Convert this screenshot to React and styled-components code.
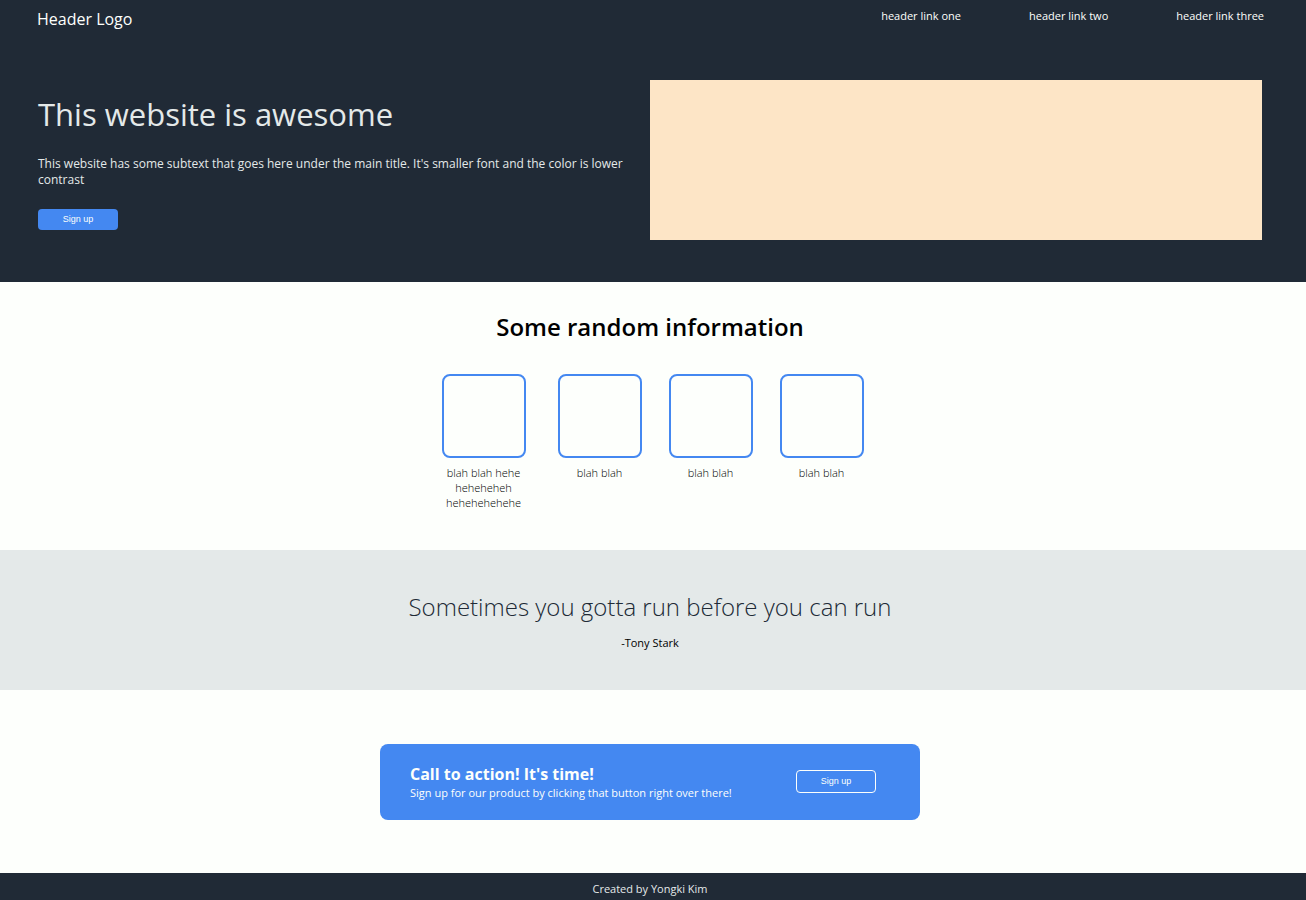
import React from "react";
import styled, { createGlobalStyle } from "styled-components";

const GlobalStyle = createGlobalStyle`
  *, *::before, *::after { box-sizing: border-box; }
  body {
    margin: 0;
    background: #fdfffc;
    color: #000;
    font-family: "Open Sans", "Noto Sans", sans-serif;
    font-size: 11px;
    line-height: 15px;
  }
  h1, h2, p, ul, blockquote, figure { margin: 0; padding: 0; }
`;

const Page = styled.div`
  min-height: 100vh;
  display: flex;
  flex-direction: column;
`;

const Header = styled.header`
  background: #202a36;
  color: #fdfffc;
  padding: 8px 42px 42px 37px;
`;

const TopBar = styled.div`
  display: flex;
  justify-content: space-between;
  align-items: flex-start;
`;

const Logo = styled.div`
  font-size: 16px;
  line-height: 22px;
`;

const LinkList = styled.ul`
  display: flex;
  gap: 68px;
  list-style: none;
`;

const HeaderLink = styled.a`
  color: inherit;
  text-decoration: none;
`;

const Hero = styled.section`
  display: grid;
  grid-template-columns: 1fr 1fr;
  padding: 0 2px 0 1px;
  margin-top: 50px;
`;

const HeroText = styled.div`
  padding: 12px 24px 0 0;
`;

const HeroTitle = styled.h1`
  color: #e4e9e9;
  font-size: 31px;
  font-weight: 400;
  line-height: 44px;
`;

const HeroSubtext = styled.p`
  color: #e4e9e9;
  font-size: 12px;
  line-height: 16px;
  margin: 20px 0 21px;
`;

const HeroImage = styled.div`
  background: #fde5c6;
  height: 160px;
`;

const Button = styled.button`
  display: block;
  width: 80px;
  height: ${(p) => (p.$outlined ? "23px" : "21px")};
  padding: 0 0 1px;
  border: ${(p) => (p.$outlined ? "1px solid #fdfffc" : "0")};
  border-radius: 4px;
  background: #4488f1;
  color: #fdfffc;
  font-family: "Liberation Sans", Arial, sans-serif;
  font-size: 9px;
  cursor: pointer;
`;

const Info = styled.section`
  padding: 28px 6px 40px 0;
  text-align: center;
`;

const InfoTitle = styled.h2`
  font-size: 24px;
  font-weight: 600;
  line-height: 34px;
`;

const Cards = styled.ul`
  display: flex;
  justify-content: center;
  gap: 27px;
  margin-top: 30px;
  list-style: none;
`;

const Card = styled.li`
  display: flex;
  flex-direction: column;
  align-items: center;
  max-width: 94px;
  min-width: ${(p) => (p.$wide ? "94px" : "84px")};
  font-weight: 300;
`;

const CardBox = styled.div`
  width: 84px;
  height: 84px;
  margin-bottom: 7px;
  border: 2px solid #4488f1;
  border-radius: 8px;
`;

const Quote = styled.figure`
  padding: 40px 6px 40px 0;
  background: #e4e9e9;
  text-align: center;
`;

const QuoteText = styled.blockquote`
  color: #202a36;
  font-size: 24px;
  font-weight: 300;
  line-height: 34px;
`;

const QuoteAuthor = styled.figcaption`
  margin-top: 11px;
`;

const Action = styled.section`
  display: flex;
  justify-content: center;
  padding: 54px 6px 53px 0;
`;

const ActionPanel = styled.div`
  display: flex;
  justify-content: space-between;
  align-items: center;
  width: 540px;
  max-width: 100%;
  padding: 19px 44px 20px 30px;
  border-radius: 8px;
  background: #4488f1;
  color: #fdfffc;
`;

const ActionTitle = styled.h2`
  font-size: 16px;
  font-weight: 700;
  line-height: 22px;
`;

const Footer = styled.footer`
  flex: 1;
  padding: 8px 6px 4px 0;
  background: #202a36;
  color: #e4e9e9;
  text-align: center;
`;

const links = ["header link one", "header link two", "header link three"];
const cards = ["blah blah hehe heheheheh hehehehehehe", "blah blah", "blah blah", "blah blah"];

export default function App() {
  return (
    <Page>
      <GlobalStyle />
      <Header>
        <TopBar>
          <Logo>Header Logo</Logo>
          <nav>
            <LinkList>
              {links.map((text) => (
                <li key={text}>
                  <HeaderLink href="#">{text}</HeaderLink>
                </li>
              ))}
            </LinkList>
          </nav>
        </TopBar>
        <Hero>
          <HeroText>
            <HeroTitle>This website is awesome</HeroTitle>
            <HeroSubtext>
              This website has some subtext that goes here under the main title. It's smaller font
              and the color is lower contrast
            </HeroSubtext>
            <Button type="button">Sign up</Button>
          </HeroText>
          <HeroImage />
        </Hero>
      </Header>
      <Info>
        <InfoTitle>Some random information</InfoTitle>
        <Cards>
          {cards.map((text, i) => (
            <Card key={i} $wide={i === 0}>
              <CardBox />
              <p>{text}</p>
            </Card>
          ))}
        </Cards>
      </Info>
      <Quote>
        <QuoteText>Sometimes you gotta run before you can run</QuoteText>
        <QuoteAuthor>-Tony Stark</QuoteAuthor>
      </Quote>
      <Action>
        <ActionPanel>
          <div>
            <ActionTitle>Call to action! It's time!</ActionTitle>
            <p>Sign up for our product by clicking that button right over there!</p>
          </div>
          <Button type="button" $outlined>
            Sign up
          </Button>
        </ActionPanel>
      </Action>
      <Footer>Created by Yongki Kim</Footer>
    </Page>
  );
}
